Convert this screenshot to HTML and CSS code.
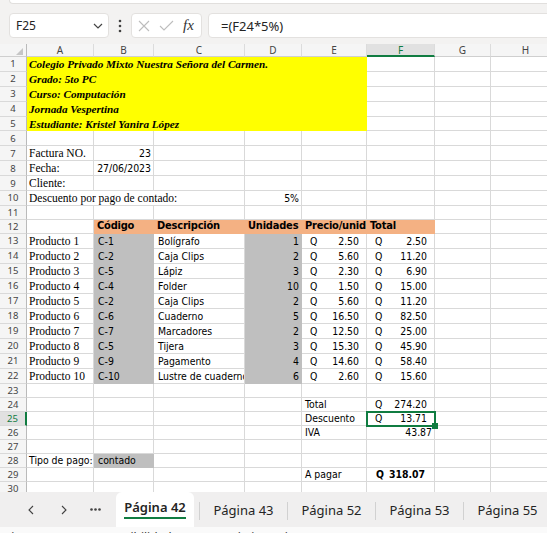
FILE: index.html
```html
<!DOCTYPE html>
<html lang="es">
<head>
<meta charset="utf-8">
<title>Factura</title>
<link rel="stylesheet" href="styles.css">
</head>
<body>
<div class="ribbon-edge"></div>
<div class="fbar">
  <div class="namebox"><span>F25</span><svg width="10" height="6" viewBox="0 0 10 6"><path d="M1 1l4 4 4-4" fill="none" stroke="#444" stroke-width="1.2"/></svg></div>
  <div class="dots"><svg width="4" height="14" viewBox="0 0 4 14"><circle cx="2" cy="2" r="1.3"/><circle cx="2" cy="7" r="1.3"/><circle cx="2" cy="12" r="1.3"/></svg></div>
  <div class="fxbox">
    <svg width="12" height="12" viewBox="0 0 12 12"><path d="M1 1l10 10M11 1L1 11" stroke="#bdbdbd" stroke-width="1.1"/></svg>
    <svg width="15" height="11" viewBox="0 0 15 11"><path d="M1 6l4 4 9-9" fill="none" stroke="#bdbdbd" stroke-width="1.1"/></svg>
    <span class="fx">fx</span>
  </div>
  <div class="formula">=(F24*5%)</div>
</div>

<div class="sheet">
  <div class="row ch"><div class="corner"><svg width="7" height="7" viewBox="0 0 7 7"><path d="M7 0V7H0z" fill="#c6c6c6"/></svg></div><div>A</div><div>B</div><div>C</div><div>D</div><div>E</div><div class="csel">F</div><div>G</div><div>H</div></div>
  <div class="row"><div>1</div><div class="y t bi s5">Colegio Privado Mixto Nuestra Señora del Carmen.</div><div></div><div></div><div></div></div>
  <div class="row"><div>2</div><div class="y t bi s5">Grado: 5to PC</div><div></div><div></div><div></div></div>
  <div class="row"><div>3</div><div class="y t bi s5">Curso: Computación</div><div></div><div></div><div></div></div>
  <div class="row"><div>4</div><div class="y t bi s5">Jornada Vespertina</div><div></div><div></div><div></div></div>
  <div class="row"><div>5</div><div class="y t bi s5">Estudiante: Kristel Yanira López</div><div></div><div></div><div></div></div>
  <div class="row"><div>6</div><div></div><div></div><div></div><div></div><div></div><div></div><div></div><div></div></div>
  <div class="row"><div>7</div><div class="t">Factura NO.</div><div class="n">23</div><div></div><div></div><div></div><div></div><div></div><div></div></div>
  <div class="row"><div>8</div><div class="t">Fecha:</div><div class="n">27/06/2023</div><div></div><div></div><div></div><div></div><div></div><div></div></div>
  <div class="row"><div>9</div><div class="t">Cliente:</div><div></div><div></div><div></div><div></div><div></div><div></div><div></div></div>
  <div class="row"><div>10</div><div class="t s3">Descuento por pago de contado:</div><div class="n">5%</div><div></div><div></div><div></div><div></div></div>
  <div class="row sh"><div>11</div><div></div><div></div><div></div><div></div><div></div><div></div><div></div><div></div></div>
  <div class="row sh"><div>12</div><div></div><div class="o">Código</div><div class="o">Descripción</div><div class="o">Unidades</div><div class="o">Precio/unid</div><div class="o">Total</div><div></div><div></div></div>
  <div class="row p"><div>13</div><div class="t">Producto 1</div><div class="g c">C-1</div><div class="c">Bolígrafo</div><div class="g n">1</div><div class="q"><span>Q</span><span>2.50</span></div><div class="q"><span>Q</span><span>2.50</span></div><div></div><div></div></div>
  <div class="row p"><div>14</div><div class="t">Producto 2</div><div class="g c">C-2</div><div class="c">Caja Clips</div><div class="g n">2</div><div class="q"><span>Q</span><span>5.60</span></div><div class="q"><span>Q</span><span>11.20</span></div><div></div><div></div></div>
  <div class="row p"><div>15</div><div class="t">Producto 3</div><div class="g c">C-5</div><div class="c">Lápiz</div><div class="g n">3</div><div class="q"><span>Q</span><span>2.30</span></div><div class="q"><span>Q</span><span>6.90</span></div><div></div><div></div></div>
  <div class="row p"><div>16</div><div class="t">Producto 4</div><div class="g c">C-4</div><div class="c">Folder</div><div class="g n">10</div><div class="q"><span>Q</span><span>1.50</span></div><div class="q"><span>Q</span><span>15.00</span></div><div></div><div></div></div>
  <div class="row p"><div>17</div><div class="t">Producto 5</div><div class="g c">C-2</div><div class="c">Caja Clips</div><div class="g n">2</div><div class="q"><span>Q</span><span>5.60</span></div><div class="q"><span>Q</span><span>11.20</span></div><div></div><div></div></div>
  <div class="row p"><div>18</div><div class="t">Producto 6</div><div class="g c">C-6</div><div class="c">Cuaderno</div><div class="g n">5</div><div class="q"><span>Q</span><span>16.50</span></div><div class="q"><span>Q</span><span>82.50</span></div><div></div><div></div></div>
  <div class="row p"><div>19</div><div class="t">Producto 7</div><div class="g c">C-7</div><div class="c">Marcadores</div><div class="g n">2</div><div class="q"><span>Q</span><span>12.50</span></div><div class="q"><span>Q</span><span>25.00</span></div><div></div><div></div></div>
  <div class="row p"><div>20</div><div class="t">Producto 8</div><div class="g c">C-5</div><div class="c">Tijera</div><div class="g n">3</div><div class="q"><span>Q</span><span>15.30</span></div><div class="q"><span>Q</span><span>45.90</span></div><div></div><div></div></div>
  <div class="row p"><div>21</div><div class="t">Producto 9</div><div class="g c">C-9</div><div class="c">Pagamento</div><div class="g n">4</div><div class="q"><span>Q</span><span>14.60</span></div><div class="q"><span>Q</span><span>58.40</span></div><div></div><div></div></div>
  <div class="row p"><div>22</div><div class="t">Producto 10</div><div class="g c">C-10</div><div class="c">Lustre de cuaderno</div><div class="g n">6</div><div class="q"><span>Q</span><span>2.60</span></div><div class="q"><span>Q</span><span>15.60</span></div><div></div><div></div></div>
  <div class="row sh"><div>23</div><div></div><div></div><div></div><div></div><div></div><div></div><div></div><div></div></div>
  <div class="row sh"><div>24</div><div></div><div></div><div></div><div></div><div class="e">Total</div><div class="q"><span>Q</span><span>274.20</span></div><div></div><div></div></div>
  <div class="row sh"><div class="rsel">25</div><div></div><div></div><div></div><div></div><div class="e">Descuento</div><div class="q sel"><span>Q</span><span>13.71</span></div><div></div><div></div></div>
  <div class="row sh"><div>26</div><div></div><div></div><div></div><div></div><div class="e">IVA</div><div class="n">43.87</div><div></div><div></div></div>
  <div class="row sh"><div>27</div><div></div><div></div><div></div><div></div><div></div><div></div><div></div><div></div></div>
  <div class="row sh"><div>28</div><div>Tipo de pago:</div><div class="g c">contado</div><div></div><div></div><div></div><div></div><div></div><div></div></div>
  <div class="row sh"><div>29</div><div></div><div></div><div></div><div></div><div class="e">A pagar</div><div class="q b"><span>Q</span><span>318.07</span></div><div></div><div></div></div>
  <div class="row sh"><div>30</div><div></div><div></div><div></div><div></div><div></div><div></div><div></div><div></div></div>
</div>

<div class="tabbar">
  <div class="nav">
    <svg width="6" height="10" viewBox="0 0 6 10"><path d="M5 1L1 5l4 4" fill="none" stroke="#424242" stroke-width="1.1"/></svg>
    <svg class="next" width="6" height="10" viewBox="0 0 6 10"><path d="M1 1l4 4-4 4" fill="none" stroke="#424242" stroke-width="1.1"/></svg>
    <svg class="more" width="11" height="3" viewBox="0 0 11 3"><circle cx="1.5" cy="1.5" r="1.3"/><circle cx="5.5" cy="1.5" r="1.3"/><circle cx="9.5" cy="1.5" r="1.3"/></svg>
  </div>
  <div class="tab active"><span>Página 42</span></div>
  <i class="sep first"></i>
  <div class="tab">Página 43</div>
  <i class="sep"></i>
  <div class="tab">Página 52</div>
  <i class="sep"></i>
  <div class="tab">Página 53</div>
  <i class="sep"></i>
  <div class="tab">Página 55</div>
</div>
<div class="status">
  <span class="st1">Listo</span>
  <svg class="st2" width="12" height="10" viewBox="0 0 12 10"><rect x="0.5" y="0.5" width="11" height="9" fill="none" stroke="#444"/><path d="M0.5 3.5h11" stroke="#444"/></svg>
  <svg class="st3" width="12" height="10" viewBox="0 0 12 10"><circle cx="6" cy="2" r="1.6" fill="none" stroke="#444"/><path d="M1 4.5h10" stroke="#444"/></svg>
  <span class="st4">Accesibilidad: es necesario investigar</span>
</div>
</body>
</html>
```
FILE: styles.css
```css
* { box-sizing: border-box; }
html, body { margin: 0; padding: 0; }
body {
  width: 547px;
  height: 533px;
  overflow: hidden;
  background: #f3f2f1;
  font-family: "Noto Sans", "Liberation Sans", sans-serif;
  color: #242424;
}

/* ---------- formula bar ---------- */
.ribbon-edge {
  height: 4px;
  margin-left: 9px;
  background: #fff;
  border-left: 1px solid #e1dfdd;
  border-bottom: 1px solid #e1dfdd;
  border-bottom-left-radius: 6px;
}
.fbar {
  height: 40px;
  display: flex;
  align-items: flex-start;
  padding: 9px 0 0 9px;
}
.namebox {
  width: 100px;
  height: 25px;
  flex: none;
  background: #fff;
  border: 1px solid #e3e1df;
  border-radius: 4px;
  display: flex;
  align-items: center;
  justify-content: space-between;
  padding: 0 5px 0 6px;
  font-size: 12px;
}
.dots {
  width: 22px;
  height: 25px;
  flex: none;
  display: flex;
  align-items: center;
  justify-content: center;
  fill: #424242;
}
.fxbox {
  width: 71px;
  height: 25px;
  flex: none;
  background: #fff;
  border: 1px solid #e3e1df;
  border-radius: 4px;
  display: flex;
  align-items: center;
  padding-left: 6px;
  gap: 9px;
}
.fx {
  font: italic 15px "Liberation Serif", serif;
  color: #333;
}
.formula {
  flex: 1;
  height: 25px;
  margin: 0 -10px 0 6px;
  background: #fff;
  border: 1px solid #e3e1df;
  border-radius: 4px;
  display: flex;
  align-items: center;
  padding-left: 12px;
  font-size: 13px;
}

/* ---------- sheet ---------- */
.sheet {
  height: 448px;
  overflow: hidden;
  background: #fff;
}
.row {
  display: grid;
  grid-template-columns: 27px 67px 60px 91px 57px 65px 68px 56px 70px;
  height: 14.9px;
}
.row.p { height: 15px; }
.row.sh { height: 14px; }
.row > div {
  border-right: 1px solid #d9d9d9;
  border-bottom: 1px solid #d9d9d9;
  padding: 0 2px;
  display: flex;
  align-items: flex-end;
  overflow: hidden;
  white-space: nowrap;
  font-family: "DejaVu Sans Condensed", "DejaVu Sans", sans-serif;
  font-stretch: condensed;
  font-size: 10.4px;
  line-height: 1.15;
  color: #000;
}
.row > div:first-child {
  background: #f5f5f5;
  border-right-color: #bababa;
  justify-content: center;
  align-items: center;
  font: 9.5px "Noto Sans", sans-serif;
  color: #444;
}
.row.ch { height: 13px; }
.row.ch > div {
  background: #f5f5f5;
  justify-content: center;
  align-items: center;
  font: 10px "Noto Sans", sans-serif;
  color: #444;
  border-bottom-color: #cfcfcf;
  border-right-color: #dcdcdc;
}
.row.ch > .corner {
  justify-content: flex-end;
  align-items: flex-end;
  padding: 0 3px 1px 0;
  border-right-color: #bababa;
}
.row.ch > .csel {
  background: #e1e1e1;
  color: #107c41;
  border-bottom: 2px solid #107c41;
}
.row > div.rsel {
  background: #e1e1e1;
  color: #107c41;
  border-right: 2px solid #107c41;
}

.row > .t {
  font: 11.5px "Liberation Serif", serif;
  line-height: 1.15;
}
.row > .bi { font-weight: bold; font-style: italic; font-size: 11.2px; }
.row > .y { background: #ffff00; border-color: #ffff00; }
.row > .o {
  background: #f4b183;
  border-color: #f4b183;
  font-weight: bold;
  font-size: 11px;
  letter-spacing: -0.2px;
  padding-left: 3px;
}
.row > .g { background: #bfbfbf; border-color: #bfbfbf; }
.row > .c { padding-left: 4px; }
.row > .e { padding-left: 3px; }
.row > .n { justify-content: flex-end; }
.row > .q { justify-content: space-between; padding: 0 7px 0 8px; }
.row > .b { font-weight: bold; padding: 0 9px 0 9px; }
.s5 { grid-column: span 5; }
.s3 { grid-column: span 3; }

.row > .sel { overflow: visible; position: relative; }
.sel::after {
  content: "";
  position: absolute;
  left: -1px;
  top: -1px;
  right: -2px;
  bottom: -2px;
  border: 2px solid #107c41;
  z-index: 2;
}
.sel::before {
  content: "";
  position: absolute;
  right: -4px;
  bottom: -4px;
  width: 6px;
  height: 6px;
  background: #107c41;
  z-index: 3;
}

/* ---------- sheet tabs ---------- */
.tabbar {
  height: 35px;
  display: flex;
  align-items: stretch;
  background: #f0efef;
  font-size: 13px;
  color: #242424;
}
.nav {
  width: 116px;
  flex: none;
  display: flex;
  align-items: center;
  padding-left: 28px;
  fill: #424242;
}
.nav .next { margin-left: 27px; }
.nav .more { margin-left: 23px; }
.tab {
  width: 87px;
  flex: none;
  display: flex;
  align-items: center;
  justify-content: center;
  padding-top: 1px;
}
.tab.active {
  width: 78px;
  background: #fff;
  border-radius: 6px 6px 0 0;
  font-weight: 600;
  padding: 0 0 3px 0;
}
.tab.active span {
  padding-bottom: 1px;
  border-bottom: 2px solid #107c41;
}
.sep {
  width: 1px;
  flex: none;
  align-self: center;
  height: 18px;
  margin-top: 2px;
  background: #d1d1d1;
}
.sep.first { margin-left: 5px; }

.status {
  height: 14px;
  background: #fafafa;
  display: flex;
  align-items: flex-start;
  padding-top: 4px;
  font-size: 12px;
  line-height: 14px;
  color: #333;
}
.st1 { margin-left: 5px; }
.st2 { margin-left: 16px; margin-top: 4px; }
.st3 { margin-left: 20px; margin-top: 3px; }
.st4 { margin-left: 7px; }
```
